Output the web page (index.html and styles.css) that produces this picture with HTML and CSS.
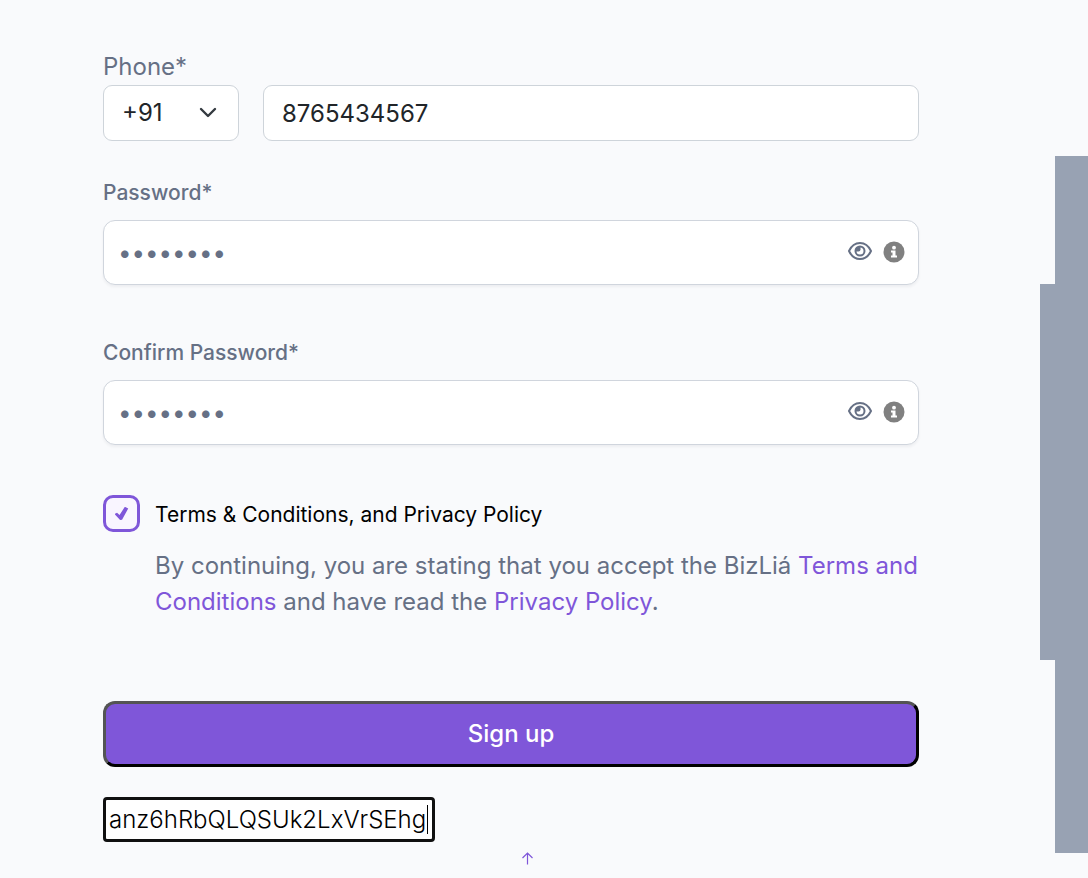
FILE: index.html
```
<!DOCTYPE html>
<html lang="en">
<head>
<meta charset="utf-8">
<meta name="viewport" content="width=device-width, initial-scale=1">
<title>Sign up</title>
<link rel="stylesheet" href="styles.css">
</head>
<body>
<svg class="sprite" aria-hidden="true">
  <symbol id="eye" viewBox="0 0 24 20">
    <path d="M1 9C3.400 3.900 7.200 1 12 1S20.600 3.900 23 9C20.600 14.100 16.800 17 12 17S3.400 14.100 1 9Z" fill="none" stroke="currentColor" stroke-width="2"/>
    <circle cx="12" cy="9" r="4.500" fill="none" stroke="currentColor" stroke-width="2"/>
    <path d="M12.500 5V7.500Q12.500 9.500 10.500 9.500H8V5Z" fill="currentColor"/>
  </symbol>
  <symbol id="info" viewBox="0 0 22 22">
    <circle cx="11" cy="11" r="10.500" fill="#808080"/>
    <circle cx="11" cy="6.700" r="1.900" fill="#fff"/>
    <path d="M8 9.500H12.500V14.500H14V16.500H8V14.500H9.500V11.500H8Z" fill="#fff"/>
  </symbol>
</svg>
<div class="page">
  <main class="content">
    <form class="form">
      <div class="phone">
        <label class="phone-label" for="phone">Phone*</label>
        <div class="phone-row">
          <div class="code">
            <select class="box code-select" aria-label="Country code"><option>+91</option></select>
            <svg class="chevron" viewBox="0 0 18 12" aria-hidden="true"><path d="M2 2L9 9L16 2" fill="none" stroke="#343a40" stroke-width="2.400" stroke-linecap="round" stroke-linejoin="round"/></svg>
          </div>
          <input class="box number" id="phone" type="tel" value="8765434567">
        </div>
      </div>
      <div class="field">
        <label class="label" for="password">Password*</label>
        <div class="secret">
          <input class="secret-input" id="password" type="password" value="password">
          <button class="icon-button" type="button" aria-label="Show password"><svg class="eye"><use href="#eye"/></svg></button>
          <button class="icon-button" type="button" aria-label="Password rules"><svg class="info"><use href="#info"/></svg></button>
        </div>
      </div>
      <div class="field confirm">
        <label class="label" for="confirm">Confirm Password*</label>
        <div class="secret">
          <input class="secret-input" id="confirm" type="password" value="password">
          <button class="icon-button" type="button" aria-label="Show password"><svg class="eye"><use href="#eye"/></svg></button>
          <button class="icon-button" type="button" aria-label="Password rules"><svg class="info"><use href="#info"/></svg></button>
        </div>
      </div>
      <div class="terms">
        <input class="check" id="terms" type="checkbox" checked>
        <div class="terms-text">
          <label class="terms-label" for="terms">Terms &amp; Conditions, and Privacy Policy</label>
          <p class="terms-note">By continuing, you are stating that you accept the BizLiá <a href="#terms">Terms and Conditions</a> and have read the <a href="#privacy">Privacy Policy</a>.</p>
        </div>
      </div>
      <button class="submit" type="submit">Sign up</button>
      <div class="token">
        <input class="token-input" type="text" aria-label="Token" value="anz6hRbQLQSUk2LxVrSEhg">
      </div>
    </form>
    <a class="top" href="#phone" aria-label="Back to top"><svg class="arrow" viewBox="0 0 13 13"><path d="M6.500 12.500V1.500M1.500 6L6.500 1L11.500 6" fill="none" stroke="currentColor" stroke-width="1.200"/></svg></a>
  </main>
  <div class="blocks" aria-hidden="true"><i class="block upper"></i><i class="block middle"></i><i class="block lower"></i></div>
</div>
</body>
</html>
```
FILE: styles.css
```
* { box-sizing: border-box; }
body {
  margin: 0;
  background: #f9fafc;
  color: #667085;
  font: 400 24px/36px Inter, sans-serif;
}
.sprite { display: none; }
svg { display: block; }
.page { display: flex; justify-content: space-between; min-height: 100vh; overflow: hidden; }
.content { flex: 0 1 919px; padding: 49px 0 0 103px; }
.form { display: flex; flex-direction: column; }
input, select, button { font: inherit; color: inherit; }
.phone-label { display: block; }
.phone-row { display: flex; gap: 24px; }
.box {
  height: 56px;
  padding: 0 18px;
  border: 1px solid #ced4da;
  border-radius: 9px;
  background: #fff;
  color: #212529;
}
.code { position: relative; flex: 0 0 136px; }
.code-select { width: 100%; appearance: none; }
.chevron { position: absolute; right: 22px; top: 22px; width: 18px; height: 12px; pointer-events: none; }
.number { flex: 1; min-width: 0; }
.field { margin-top: 36px; }
.confirm { margin-top: 52px; }
.label { display: block; margin-bottom: 12px; font-size: 21px; font-weight: 500; line-height: 31px; }
.secret {
  display: flex;
  align-items: center;
  height: 65px;
  padding-right: 13px;
  border: 1px solid #d0d5dd;
  border-radius: 12px;
  background: #fff;
  box-shadow: 0 2px 3px rgba(16, 24, 40, 0.05);
}
.secret-input { flex: 1; min-width: 0; padding: 0 14px; border: 0; background: none; outline: 0; }
.icon-button { padding: 0 0 1px; border: 0; background: none; }
.icon-button + .icon-button { margin-left: 11px; }
.eye { width: 24px; height: 20px; }
.info { width: 22px; height: 22px; }
.terms { display: flex; gap: 15px; margin-top: 50px; }
.check {
  flex: none;
  display: grid;
  place-items: center;
  width: 37px;
  height: 37px;
  margin: 0;
  appearance: none;
  border: 3px solid #7f56d9;
  border-radius: 10px;
  background: #f9f5ff;
}
.check::before {
  content: "";
  width: 14px;
  height: 14px;
  background: #7f56d9;
  clip-path: polygon(0 54%, 18% 44%, 36% 60%, 74% 2%, 98% 14%, 54% 94%, 40% 96%);
}
.terms-text { min-width: 0; }
.terms-label { display: block; color: #000; font-size: 21px; line-height: 40px; }
.terms-note { margin: 13px 0 0; }
.terms-note a, .top { color: #7f56d9; text-decoration: none; }
.submit {
  height: 66px;
  margin-top: 81px;
  border: 3px outset #000;
  border-radius: 12px;
  background: #7f56d9;
  color: #fff;
  font-weight: 500;
}
.token { position: relative; width: 332px; margin-top: 30px; }
.token::after { content: ""; position: absolute; top: 8px; right: 7px; width: 1px; height: 29px; background: #000; }
.token-input {
  display: block;
  width: 100%;
  height: 45px;
  padding: 0 3px;
  border: 3px solid #101010;
  border-radius: 4px;
  background: #fff;
  color: #000;
  font-weight: 300;
  outline: 0;
}
.top { display: block; width: 13px; margin: 10px auto 0; position: relative; left: 16px; }
.arrow { width: 13px; height: 13px; }
.blocks { display: flex; flex-direction: column; align-items: flex-end; width: 48px; padding-top: 156px; }
.block { width: 33px; background: #98a2b3; }
.upper { height: 128px; }
.middle { width: 48px; height: 376px; }
.lower { height: 193px; }
```
